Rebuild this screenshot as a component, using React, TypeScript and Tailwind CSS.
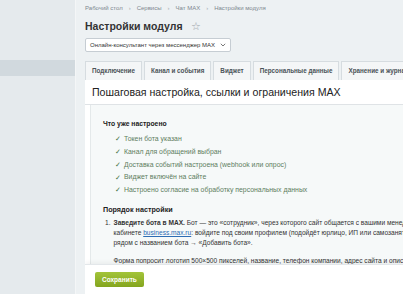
import React from 'react';

const tabs = ['Подключение', 'Канал и события', 'Виджет', 'Персональные данные', 'Хранение и журнал'];

const done = [
  'Токен бота указан',
  'Канал для обращений выбран',
  'Доставка событий настроена (webhook или опрос)',
  'Виджет включён на сайте',
  'Настроено согласие на обработку персональных данных',
];

function Crumbs() {
  const items = ['Рабочий стол', 'Сервисы', 'Чат MAX', 'Настройки модуля'];
  return (
    <div className="flex items-center gap-[6px] text-[6px] text-[#7d8790] h-[16px] pt-[1px]">
      {items.map((t, i) => (
        <React.Fragment key={t}>
          {i > 0 && <span className="text-[#a0a8ae]">›</span>}
          <span>{t}</span>
        </React.Fragment>
      ))}
    </div>
  );
}

export default function App() {
  return (
    <div className="flex h-[294px] w-[403px] overflow-hidden bg-[#edf1f3] font-['Liberation_Sans',Arial,sans-serif] text-[#333]">
      {/* sidebar */}
      <aside className="w-[76px] shrink-0 bg-[#e5eaed] border-r border-[#f4f6f7] pt-[60px]">
        <div className="h-[16px] bg-[#d1d9de]" />
      </aside>

      <main className="flex-1 min-w-0 flex flex-col pl-[9px]">
        <Crumbs />
        <div className="flex items-center gap-[8px] h-[19px] mt-[1px]">
          <h1 className="text-[10.5px] font-bold text-[#333] whitespace-nowrap">Настройки модуля</h1>
          <span className="text-[11px] text-[#9aa3a9] leading-none">☆</span>
        </div>
        <div className="mt-[2px] flex">
          <div className="flex items-center gap-[4px] h-[14px] bg-white border border-[#c6cdd3] rounded-[2px] px-[4px] text-[6px] text-[#333] whitespace-nowrap">
            Онлайн-консультант через мессенджер MAX
            <svg width="6" height="4" viewBox="0 0 6 4" className="ml-[1px]">
              <path d="M0.8 0.8 L3 3 L5.2 0.8" fill="none" stroke="#555" strokeWidth="0.8" />
            </svg>
          </div>
        </div>

        <div className="mt-[9px] flex gap-[2px] h-[19px] whitespace-nowrap">
          {tabs.map((t) => (
            <div
              key={t}
              className="shrink-0 flex items-center px-[6px] bg-[#f4f6f7] border border-b-0 border-[#d6dce0] text-[6.3px] font-bold text-[#4b5358]"
            >
              {t}
            </div>
          ))}
        </div>

        <section className="flex-1 min-h-0 bg-white flex flex-col overflow-hidden">
          <div className="px-[7px] pt-[6px] pb-[6px] border-b border-[#dfe3e6]">
            <h2 className="text-[10.6px] text-[#222] whitespace-nowrap leading-[12px]">
              Пошаговая настройка, ссылки и ограничения MAX
            </h2>
          </div>
          <div className="flex-1 min-h-0 ml-[5px] bg-[#f6f9f9] border-l border-[#e4e9ea] pl-[12px] pt-[14px] text-[6.6px] overflow-hidden whitespace-nowrap">
            <div className="font-bold text-[#222] text-[6.8px] leading-[10px]">Что уже настроено</div>
            <ul className="mt-[4px] pl-[12px]">
              {done.map((d) => (
                <li key={d} className="flex items-center gap-[4px] h-[12.7px] text-[6.9px] text-[#5d7d60]">
                  <span className="text-[#3f7240] text-[6.5px] w-[5px]">✓</span>
                  <span>{d}</span>
                </li>
              ))}
            </ul>
            <div className="mt-[9px] font-bold text-[#222] text-[7.2px] leading-[10px]">Порядок настройки</div>
            <ol className="mt-[3px] pl-[2px] text-[#333] leading-[10px]">
              <li className="flex gap-[3px]">
                <span>1.</span>
                <div>
                  <div>
                    <b>Заведите бота в MAX.</b> Бот — это «сотрудник», через которого сайт общается с вашими менеджерами. В личном
                  </div>
                  <div>
                    кабинете <span className="text-[#2d6db4] underline">business.max.ru</span>: войдите под своим профилем (подойдёт юрлицо, ИП или самозанятый), раздел «Боты»
                  </div>
                  <div>рядом с названием бота → «Добавить бота».</div>
                  <div className="mt-[8px]">
                    Форма попросит логотип 500×500 пикселей, название, телефон компании, адрес сайта и описание — всё это
                  </div>
                  <div>увидит пользователь. После модерации бот появится в списке.</div>
                </div>
              </li>
            </ol>
          </div>
          <footer className="h-[30px] shrink-0 bg-white border-t border-[#e3e7ea] shadow-[0_-2px_4px_rgba(0,0,0,0.05)] flex items-center pl-[10px]">
            <button className="h-[15px] px-[7px] rounded-[2px] bg-gradient-to-b from-[#a3c43a] to-[#84a51e] text-white text-[6.5px] font-bold">
              Сохранить
            </button>
          </footer>
        </section>
      </main>
    </div>
  );
}
